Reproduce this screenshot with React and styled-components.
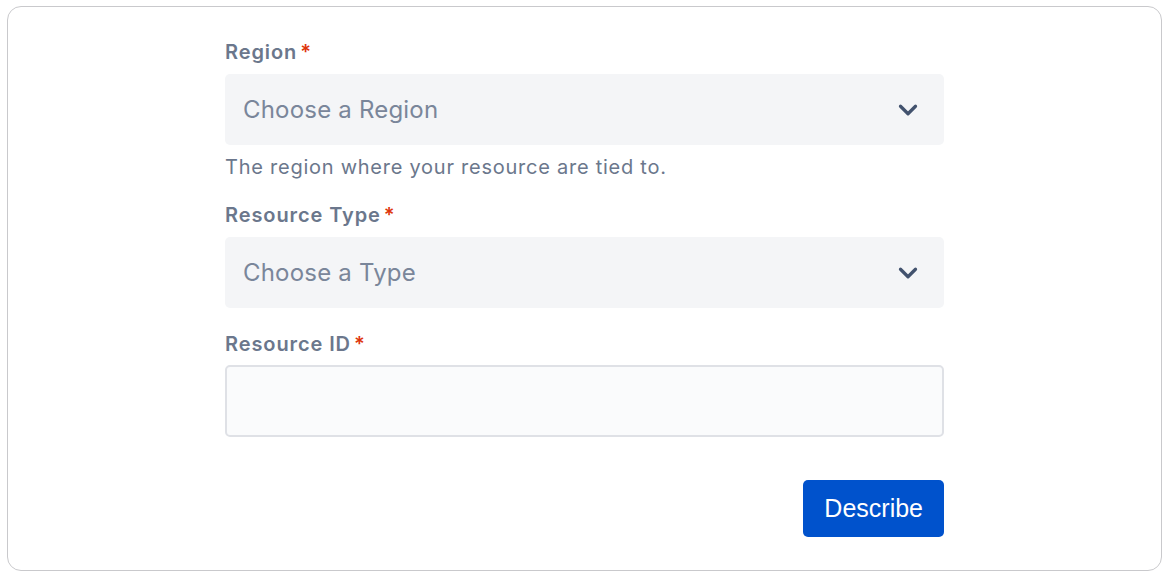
import React from "react";
import styled, { createGlobalStyle } from "styled-components";

const GlobalStyle = createGlobalStyle`
  html, body {
    margin: 0;
    padding: 0;
    background: #ffffff;
  }
  body {
    font-family: Inter, "Liberation Sans", sans-serif;
  }
`;

const Page = styled("div")`
  width: 1168px;
  height: 576px;
  padding: 6px 6px 0 7px;
  box-sizing: border-box;
`;

const Card = styled("div")`
  height: 565px;
  box-sizing: border-box;
  border: 1px solid #c9c9cc;
  border-radius: 14px;
  padding-top: 33px;
  display: flex;
  justify-content: center;
`;

const Form = styled("form")`
  width: 719px;
  display: flex;
  flex-direction: column;
`;

const Field = styled("div")`
  display: flex;
  flex-direction: column;
  margin-top: ${(p) => (p.$first ? "0" : "24px")};
`;

const Label = styled("label")`
  font-size: 20px;
  line-height: 24px;
  font-weight: 600;
  color: #6b778c;
  margin-bottom: 10px;
  letter-spacing: 0.9px;
`;

const Required = styled("span")`
  color: #de350b;
  margin-left: 3px;
`;

const Select = styled("div")`
  height: 71px;
  box-sizing: border-box;
  background: #f4f5f7;
  border-radius: 5px;
  display: flex;
  align-items: center;
  justify-content: space-between;
  padding: 0 21px 0 18px;
`;

const Placeholder = styled("span")`
  font-size: 24px;
  color: #7a869a;
  letter-spacing: 0.2px;
`;

const Chevron = styled("svg")`
  width: 30px;
  height: 30px;
  color: #42526e;
`;

const Help = styled("div")`
  margin-top: 10px;
  font-size: 20px;
  line-height: 24px;
  color: #6b778c;
  letter-spacing: 0.75px;
`;

const TextInput = styled("input")`
  height: 72px;
  margin-top: -1px;
  box-sizing: border-box;
  border: 2px solid #dfe1e6;
  border-radius: 5px;
  background: #fafbfc;
  outline: none;
  font-size: 24px;
  padding: 0 18px;
`;

const Actions = styled("div")`
  display: flex;
  justify-content: flex-end;
  margin-top: 43px;
`;

const Button = styled("button")`
  height: 57px;
  padding: 0 21px;
  border: none;
  border-radius: 5px;
  background: #0052cc;
  color: #ffffff;
  font-family: "Liberation Sans", Arial, sans-serif;
  font-size: 25px;
  cursor: pointer;
`;

const ChevronDown = () => (
  <Chevron viewBox="0 0 24 24" fill="none">
    <path
      d="M6 9l6 6 6-6"
      stroke="currentColor"
      strokeWidth="2.6"
      strokeLinecap="round"
      strokeLinejoin="round"
    />
  </Chevron>
);

const SelectField = ({ label, placeholder, first, help }) => (
  <Field $first={first}>
    <Label>
      {label}
      <Required>*</Required>
    </Label>
    <Select>
      <Placeholder>{placeholder}</Placeholder>
      <ChevronDown />
    </Select>
    {help && <Help>{help}</Help>}
  </Field>
);

export default function App() {
  return (
    <Page>
      <GlobalStyle />
      <Card>
        <Form onSubmit={(e) => e.preventDefault()}>
          <SelectField
            first
            label="Region"
            placeholder="Choose a Region"
            help="The region where your resource are tied to."
          />
          <SelectField label="Resource Type" placeholder="Choose a Type" />
          <Field>
            <Label>
              Resource ID
              <Required>*</Required>
            </Label>
            <TextInput type="text" />
          </Field>
          <Actions>
            <Button type="submit">Describe</Button>
          </Actions>
        </Form>
      </Card>
    </Page>
  );
}
